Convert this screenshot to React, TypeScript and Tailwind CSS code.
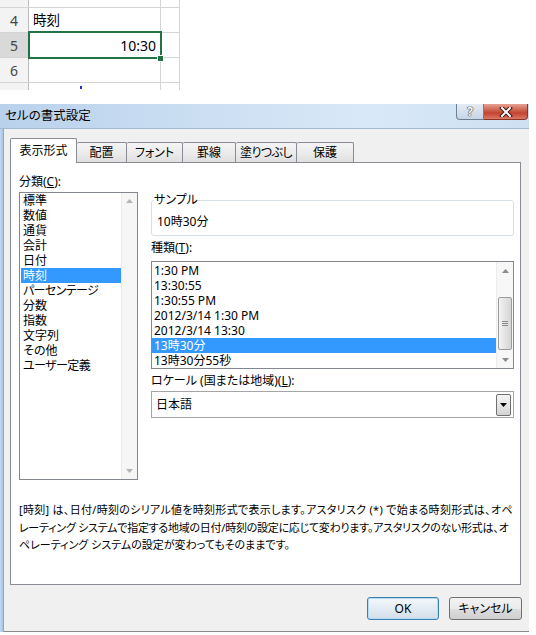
import React from "react";

const Tri = ({ dir, color = "#a9a9a9" }: { dir: "up" | "down"; color?: string }) => (
  <svg width="7" height="4" viewBox="0 0 7 4">
    {dir === "up" ? (
      <path d="M0 4 L3.5 0 L7 4 Z" fill={color} />
    ) : (
      <path d="M0 0 L7 0 L3.5 4 Z" fill={color} />
    )}
  </svg>
);

const cats = [
  "標準",
  "数値",
  "通貨",
  "会計",
  "日付",
  "時刻",
  "パーセンテージ",
  "分数",
  "指数",
  "文字列",
  "その他",
  "ユーザー定義",
];
const types = [
  "1:30 PM",
  "13:30:55",
  "1:30:55 PM",
  "2012/3/14 1:30 PM",
  "2012/3/14 13:30",
  "13時30分",
  "13時30分55秒",
];

function SheetRow({
  h,
  label,
  selected,
  children,
  last,
}: {
  h: string;
  label?: string;
  selected?: boolean;
  children?: React.ReactNode;
  last?: boolean;
}) {
  return (
    <div className={`flex ${h} ${last ? "" : "border-b border-[#d4d4d4]"}`}>
      <div
        className={`w-[29px] shrink-0 border-r border-[#bcbcbc] flex items-center justify-center text-[14px] text-[#444] ${
          selected ? "bg-[#d9d9d9]" : "bg-[#f3f3f3]"
        }`}
      >
        {label}
      </div>
      <div className="w-[132px] shrink-0 border-r border-[#d4d4d4] flex items-center">{children}</div>
      <div className="w-[19px] shrink-0 border-r border-[#d4d4d4]" />
    </div>
  );
}

export default function App() {
  return (
    <div className="w-[536px] h-[635px] bg-white overflow-hidden font-['Noto_Sans','Noto_Sans_CJK_JP',sans-serif] [font-feature-settings:'palt'] text-black">
      {/* spreadsheet */}
      <div className="relative w-[180px] h-[90px] overflow-hidden">
        <SheetRow h="h-[8px]" />
        <SheetRow h="h-[25px]" label="4">
          <span className="pl-[4px] text-[13.5px]">時刻</span>
        </SheetRow>
        <SheetRow h="h-[25px]" label="5" selected>
          <span className="w-full pr-[4px] text-right text-[14px]">10:30</span>
        </SheetRow>
        <SheetRow h="h-[25px]" label="6" />
        <SheetRow h="h-[24px]" label="7" last />
        <div className="absolute left-[28px] top-[31px] w-[134px] h-[28px] border-2 border-[#217346]" />
        <div className="absolute left-[157px] top-[55px] w-[7px] h-[7px] bg-[#217346] border border-white" />
        <div className="absolute left-[80px] top-[86px] w-[2px] h-[3px] bg-[#2a2ad0]" />
      </div>

      {/* dialog */}
      <div className="mt-[14px] w-[529px] h-[528px] flex flex-col">
        <div className="h-[25px] shrink-0 flex items-center border-b border-[#a3b9d1] bg-[linear-gradient(90deg,#b9d1eb,#cadef2_35%,#d9e8f7_70%,#cde0f2)]">
          <span className="pl-[5px] text-[12.5px]">セルの書式設定</span>
          <div className="ml-auto mr-[1px] self-start flex">
            <div className="w-[28px] h-[16px] border border-t-0 border-[#6f7f93] rounded-bl-[4px] bg-[linear-gradient(#e4ecf5,#c7d5e5)] flex items-center justify-center text-[12px] font-bold leading-none text-white [text-shadow:0_0_1px_#333,0_0_1px_#333,0_0_1px_#333]">
              ?
            </div>
            <div className="w-[44px] h-[16px] border border-l-0 border-t-0 border-[#8c3326] rounded-br-[4px] bg-[linear-gradient(#e7a294,#c9543f_50%,#c34330_60%,#d97a65)] flex items-center justify-center">
              <svg width="14" height="10" viewBox="0 0 14 10">
                <path d="M3 1 L11 9 M11 1 L3 9" stroke="#3a1510" strokeWidth="4" strokeLinecap="square" />
                <path d="M3 1 L11 9 M11 1 L3 9" stroke="#ffffff" strokeWidth="2" strokeLinecap="square" />
              </svg>
            </div>
          </div>
        </div>
        <div className="flex flex-1">
          <div className="w-[4px] shrink-0 bg-[linear-gradient(90deg,#c4d9ef,#a6c3e4)] border-r border-[#8ea9c8]" />
          <div className="flex-1 bg-[#f0f0f0] border-b border-[#8a8a8a] flex flex-col pl-[6px] pt-[9px]">
            {/* tabs */}
            <div className="flex items-end h-[24px] text-[12px]">
              <div className="relative z-10 mb-[-1px] w-[67px] h-[25px] bg-white border border-b-0 border-[#898c95] rounded-t-[2px] flex items-center justify-center pb-[1px]">
                表示形式
              </div>
              {[
                ["配置", "w-[50px]", ""],
                ["フォント", "w-[56px]", ""],
                ["罫線", "w-[53px]", ""],
                ["塗りつぶし", "w-[61px]", "tracking-[-0.6px]"],
                ["保護", "w-[57px]", ""],
              ].map(([t, w, tr], i) => (
                <div
                  key={t}
                  className={`${w} ${tr} h-[20px] border-t border-r ${i === 0 ? "border-l-0" : ""} border-[#898c95] rounded-t-[2px] bg-[linear-gradient(#f4f4f4,#ececec_50%,#dfdfdf)] flex items-center justify-center whitespace-nowrap`}
                >
                  {t}
                </div>
              ))}
            </div>

            {/* panel */}
            <div className="w-[511px] h-[423px] border border-[#898c95] bg-white flex flex-col pl-[8px] pt-[10px] text-[12px]">
              <div className="flex items-start">
                {/* left column */}
                <div className="w-[119px] shrink-0 flex flex-col">
                  <div className="h-[17px] leading-[17px]">
                    分類(<span className="underline">C</span>):
                  </div>
                  <div className="mt-[2px] h-[288px] border border-[#828790] flex">
                    <div className="flex-1 pl-[1px] flex flex-col">
                      {cats.map((c) => (
                        <div
                          key={c}
                          className={`h-[15px] leading-[15px] pl-[2px] whitespace-nowrap ${
                            c === "時刻" ? "bg-[#3399ff] text-white" : ""
                          } ${c.length > 4 ? "tracking-[-0.6px]" : ""}`}
                        >
                          {c}
                        </div>
                      ))}
                    </div>
                    <div className="w-[16px] shrink-0 bg-[#f6f6f6] border-l border-[#eaeaea] flex flex-col items-center justify-between py-[6px]">
                      <Tri dir="up" color="#b4b4b4" />
                      <Tri dir="down" color="#b4b4b4" />
                    </div>
                  </div>
                </div>

                {/* right column */}
                <div className="ml-[13px] w-[363px] flex flex-col">
                  <fieldset className="mt-[20px] h-[43px] border border-[#d5dfe5] rounded-[3px] pl-[5px]">
                    <legend className="ml-[-3px] px-0 text-[12px] leading-[14px]">サンプル</legend>
                    <div className="mt-[7px] leading-[15px]">10時30分</div>
                  </fieldset>
                  <div className="mt-[4px] h-[16px] leading-[16px]">
                    種類(<span className="underline">T</span>):
                  </div>
                  <div className="mt-[5px] h-[108px] border border-[#828790] flex">
                    <div className="flex-1 pt-[1px] flex flex-col">
                      {types.map((t) => (
                        <div
                          key={t}
                          className={`h-[15px] leading-[15px] pl-[2px] whitespace-nowrap ${
                            t === "13時30分" ? "bg-[#3399ff] text-white" : ""
                          }`}
                        >
                          {t}
                        </div>
                      ))}
                    </div>
                    <div className="w-[17px] shrink-0 bg-[#f7f7f7] border-l border-[#ececec] flex flex-col items-center">
                      <div className="h-[17px] flex items-center justify-center">
                        <Tri dir="up" color="#8a8a8a" />
                      </div>
                      <div className="h-[18px]" />
                      <div className="w-[14px] h-[53px] border border-[#9b9b9b] rounded-[2px] bg-[linear-gradient(90deg,#f3f3f3,#e3e3e3_50%,#d6d6d6)] flex flex-col items-center justify-center gap-[1px]">
                        <div className="w-[6px] h-[1px] bg-[#8a8a8a]" />
                        <div className="w-[6px] h-[1px] bg-[#8a8a8a]" />
                        <div className="w-[6px] h-[1px] bg-[#8a8a8a]" />
                      </div>
                      <div className="flex-1" />
                      <div className="h-[17px] flex items-center justify-center">
                        <Tri dir="down" color="#8a8a8a" />
                      </div>
                    </div>
                  </div>
                  <div className="mt-[4px] h-[16px] leading-[16px]">
                    ロケール (国または地域)(<span className="underline">L</span>):
                  </div>
                  <div className="mt-[2px] h-[27px] border border-[#a5a5a5] flex items-center">
                    <span className="pl-[4px] flex-1">日本語</span>
                    <div className="mr-[2px] w-[15px] h-[22px] border border-[#707070] rounded-[2px] bg-[linear-gradient(#f4f4f4,#e6e6e6_50%,#d3d3d3)] flex items-center justify-center">
                      <Tri dir="down" color="#000000" />
                    </div>
                  </div>
                </div>
              </div>

              <div className="mt-[21px] text-[11px] leading-[17.5px] whitespace-nowrap">
                <div className="tracking-[0.3px]">
                  [時刻] は、日付/時刻のシリアル値を時刻形式で表示します。アスタリスク (*) で始まる時刻形式は、オペ
                </div>
                <div className="tracking-[-0.25px]">
                  レーティング システムで指定する地域の日付/時刻の設定に応じて変わります。アスタリスクのない形式は、オ
                </div>
                <div>ペレーティング システムの設定が変わってもそのままです。</div>
              </div>
            </div>

            {/* buttons */}
            <div className="mt-[12px] flex justify-end pr-[7px] gap-[10px] text-[12px]">
              <div className="w-[72px] h-[23px] border border-[#3c7fb1] rounded-[3px] bg-[linear-gradient(#f5f8fb,#e3ecf3_50%,#d3dee8)] [box-shadow:inset_0_0_0_1px_#b4dbf5] flex items-center justify-center">
                OK
              </div>
              <div className="w-[73px] h-[23px] border border-[#707070] rounded-[3px] bg-[linear-gradient(#f2f2f2,#ebebeb_50%,#dddddd_51%,#cfcfcf)] flex items-center justify-center">
                キャンセル
              </div>
            </div>
          </div>
        </div>
      </div>
    </div>
  );
}
